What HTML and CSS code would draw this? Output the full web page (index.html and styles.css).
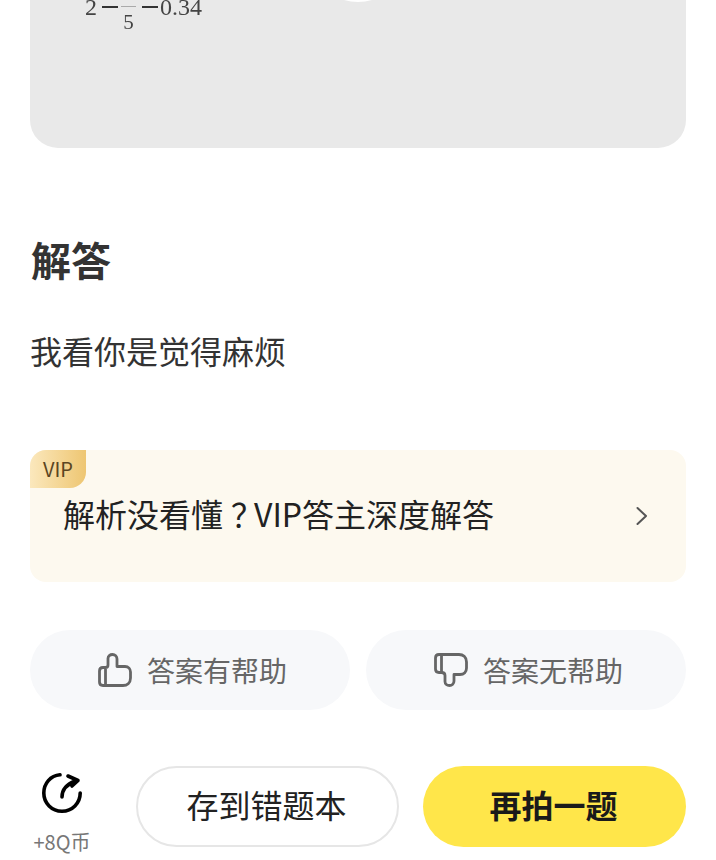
FILE: index.html
```html
<!DOCTYPE html>
<html lang="zh-CN">
<head>
  <meta charset="UTF-8">
  <meta name="viewport" content="width=device-width, initial-scale=1.0">
  <title>解答</title>
  <link rel="stylesheet" href="styles.css">
</head>
<body>
  <div class="page">

    <!-- Question picture, scrolled mostly out of view -->
    <div class="question">
      <div class="play-dot"></div>
      <div class="formula">
        <span>2</span>
        <span class="minus minus-first"></span>
        <span class="frac">5</span>
        <span class="minus"></span>
        <span class="decimal">0.34</span>
      </div>
    </div>

    <h2 class="title">解答</h2>
    <p class="answer">我看你是觉得麻烦</p>

    <!-- VIP upsell -->
    <div class="vip-card">
      <div class="vip-badge">VIP</div>
      <div class="vip-row">
        <span class="vip-text">解析没看懂<span class="qmark">&#xFF1F;</span>VIP答主深度解答</span>
        <svg class="chevron" width="14" height="20" viewBox="0 0 14 20">
          <path d="M2.5 2 L11 10 L2.5 18" fill="none" stroke="#555" stroke-width="2" stroke-linecap="round" stroke-linejoin="round"/>
        </svg>
      </div>
    </div>

    <div class="feedback">
      <div class="feedback-btn">
        <svg width="34" height="34" viewBox="0 0 34 34">
          <path d="M7.5 15 V32.5 M5 32.5 H25 C29 32.5 32.5 30 32.5 25 V19 C32.5 16 30.5 13.5 27 13.5 H19 V6 C19 3.5 17 1.5 14.5 1.5 C12 1.5 10 3 10 5.5 V12 C10 13.5 9 14.5 7.5 14.5 H5 C2.8 14.5 1.5 15.8 1.5 18 V29 C1.5 31.2 2.8 32.5 5 32.5 Z" fill="none" stroke="#666" stroke-width="2.8" stroke-linecap="round" stroke-linejoin="round"/>
        </svg>
        <span>答案有帮助</span>
      </div>
      <div class="feedback-btn">
        <svg width="34" height="34" viewBox="0 0 34 34">
          <path d="M7.5 19 V1.5 M5 1.5 H25 C29 1.5 32.5 4 32.5 9 V15 C32.5 18.8 30 21.5 26 21.5 H20 V28 C20 30.5 18 32.5 15.5 32.5 C13 32.5 11 31 11 28.5 V22.5 C11 20.5 9.5 19.5 7.5 19.5 H5 C2.8 19.5 1.5 18.2 1.5 16 V5 C1.5 2.8 2.8 1.5 5 1.5 Z" fill="none" stroke="#666" stroke-width="2.8" stroke-linecap="round" stroke-linejoin="round"/>
        </svg>
        <span>答案无帮助</span>
      </div>
    </div>

    <div class="actions">
      <div class="coin">
        <svg width="40" height="40" viewBox="0 0 40 40">
          <path d="M18 1.8 C8.5 2.6 1.8 10.4 1.8 20 C1.8 30.2 9.8 38.2 20 38.2 C30.2 38.2 38.2 30.2 38.2 20" fill="none" stroke="#000" stroke-width="3.6" stroke-linecap="round"/>
          <path d="M20 24 C20 18 23 12 33 8 M26 3 L36 7.5 L30 13" fill="none" stroke="#000" stroke-width="3.6" stroke-linecap="round" stroke-linejoin="round"/>
        </svg>
        <span class="coin-label">+8Q币</span>
      </div>
      <div class="btn btn-outline">存到错题本</div>
      <div class="btn btn-primary">再拍一题</div>
    </div>

    <!-- Tab bar just peeking in at the bottom edge -->
    <div class="peek">
      <span class="peek-a"></span>
      <span class="peek-b"></span>
      <span class="peek-a"></span>
    </div>
  </div>
</body>
</html>
```

FILE: styles.css
```css
html, body {
  margin: 0;
  height: 860px;
  overflow: hidden;
  background-color: #fff;
}
body {
  font-family: "Noto Sans CJK SC", "Liberation Sans", sans-serif;
  color: #333;
}
.page {
  height: 860px;
  padding: 0 30px;
  box-sizing: border-box;
  overflow: hidden;
}
.question {
  position: relative;
  height: 148px;
  background-color: #e9e9e9;
  border-radius: 0 0 28px 28px;
}
.play-dot {
  position: absolute;
  left: 278px;
  top: -98px;
  width: 100px;
  height: 100px;
  border-radius: 50%;
  background-color: #fff;
}
.formula {
  display: flex;
  align-items: flex-start;
  padding-left: 55px;
  font-family: "Liberation Serif", serif;
  font-size: 24px;
  line-height: 15px;
  color: #444;
  filter: blur(0.4px);
}
.minus {
  width: 16px;
  height: 2px;
  margin: 6px 0 0 6px;
  background-color: #333;
}
.minus-first {
  margin-left: 5px;
}
.frac {
  position: relative;
  width: 15px;
  margin: 15px 0 0 3px;
  font-size: 21px;
  text-align: center;
}
.frac::before {
  content: "";
  position: absolute;
  left: 0;
  right: 0;
  top: -9px;
  height: 1px;
  background-color: #aaa;
}
.decimal {
  margin-left: 2px;
}
.title {
  margin: 81px 0 0 1px;
  font-size: 40px;
  line-height: 60px;
  font-weight: 700;
  color: #333;
}
.answer {
  margin: 31px 0 0 0;
  font-size: 32px;
  line-height: 60px;
  color: #333;
}
.vip-card {
  position: relative;
  height: 132px;
  margin-top: 70px;
  background-color: #fdf9ef;
  border-radius: 16px;
}
.vip-badge {
  position: absolute;
  left: 0;
  top: 0;
  width: 56px;
  height: 38px;
  border-radius: 16px 0 16px 0;
  background: linear-gradient(90deg, #fbe8bd, #eec672);
  font-size: 20px;
  line-height: 38px;
  text-align: center;
  color: #5b4522;
}
.vip-row {
  display: flex;
  align-items: center;
  justify-content: space-between;
  padding: 38px 37px 0 33px;
  height: 50px;
}
.vip-text {
  font-size: 32px;
  line-height: 50px;
  color: #222;
}
/* question mark sits in the middle of its em box in the original */
.qmark {
  display: inline-block;
  padding-left: 8px;
  letter-spacing: -9px;
}
.chevron {
  margin-top: 6px;
}
.feedback {
  display: flex;
  gap: 16px;
  margin-top: 48px;
}
.feedback-btn {
  display: flex;
  flex: 1;
  align-items: center;
  justify-content: center;
  gap: 15px;
  height: 80px;
  padding-left: 5px;
  box-sizing: border-box;
  border-radius: 40px;
  background-color: #f7f8fa;
  font-size: 28px;
  color: #666;
}
.actions {
  display: flex;
  align-items: flex-start;
  margin-top: 56px;
}
.coin {
  display: flex;
  flex-direction: column;
  align-items: center;
  width: 60px;
  margin: 7px 44px 0 2px;
}
.coin-label {
  margin-top: 16px;
  font-size: 20px;
  line-height: 26px;
  color: #777;
  white-space: nowrap;
}
.btn {
  flex: none;
  width: 263px;
  height: 81px;
  padding-right: 2px;
  box-sizing: border-box;
  border-radius: 41px;
  font-size: 32px;
  text-align: center;
}
.btn-outline {
  border: 2px solid #e6e6e6;
  line-height: 73px;
  color: #222;
}
.btn-primary {
  margin-left: 24px;
  line-height: 77px;
  background-color: #ffe64a;
  font-weight: 700;
  color: #1a1a1a;
}
.peek {
  display: flex;
  gap: 4px;
  margin: 10px 0 0 49px;
}
.peek span {
  height: 3px;
  background-color: #bdbdbd;
}
.peek-a {
  width: 162px;
}
.peek-b {
  width: 226px;
}
```
